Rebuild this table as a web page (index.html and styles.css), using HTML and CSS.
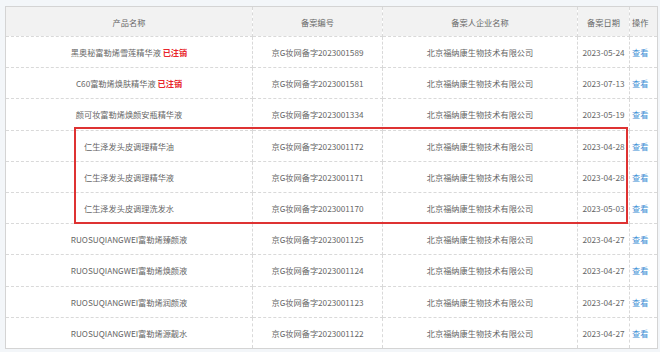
FILE: index.html
```html
<!DOCTYPE html>
<html lang="zh-CN">
<head>
<meta charset="utf-8">
<title>备案列表</title>
<link rel="stylesheet" href="styles.css">
</head>
<body>
<div class="wrap">
  <table class="grid">
    <colgroup>
      <col class="c1"><col class="c2"><col class="c3"><col class="c4"><col class="c5">
    </colgroup>
    <thead>
      <tr><th>产品名称</th><th>备案编号</th><th>备案人企业名称</th><th>备案日期</th><th>操作</th></tr>
    </thead>
    <tbody>
      <tr><td>黑奥秘富勒烯雪莲精华液 <span class="cancel">已注销</span></td><td>京G妆网备字2023001589</td><td>北京福纳康生物技术有限公司</td><td>2023-05-24</td><td class="op"><a>查看</a></td></tr>
      <tr><td>C60富勒烯焕肤精华液 <span class="cancel">已注销</span></td><td>京G妆网备字2023001581</td><td>北京福纳康生物技术有限公司</td><td>2023-07-13</td><td class="op"><a>查看</a></td></tr>
      <tr><td>颜可妆富勒烯焕颜安瓶精华液</td><td>京G妆网备字2023001334</td><td>北京福纳康生物技术有限公司</td><td>2023-05-19</td><td class="op"><a>查看</a></td></tr>
      <tr><td>仁生泽发头皮调理精华油</td><td>京G妆网备字2023001172</td><td>北京福纳康生物技术有限公司</td><td>2023-04-28</td><td class="op"><a>查看</a></td></tr>
      <tr><td>仁生泽发头皮调理精华液</td><td>京G妆网备字2023001171</td><td>北京福纳康生物技术有限公司</td><td>2023-04-28</td><td class="op"><a>查看</a></td></tr>
      <tr><td>仁生泽发头皮调理洗发水</td><td>京G妆网备字2023001170</td><td>北京福纳康生物技术有限公司</td><td>2023-05-03</td><td class="op"><a>查看</a></td></tr>
      <tr><td>RUOSUQIANGWEI富勒烯臻颜液</td><td>京G妆网备字2023001125</td><td>北京福纳康生物技术有限公司</td><td>2023-04-27</td><td class="op"><a>查看</a></td></tr>
      <tr><td>RUOSUQIANGWEI富勒烯焕颜液</td><td>京G妆网备字2023001124</td><td>北京福纳康生物技术有限公司</td><td>2023-04-27</td><td class="op"><a>查看</a></td></tr>
      <tr><td>RUOSUQIANGWEI富勒烯润颜液</td><td>京G妆网备字2023001123</td><td>北京福纳康生物技术有限公司</td><td>2023-04-27</td><td class="op"><a>查看</a></td></tr>
      <tr><td>RUOSUQIANGWEI富勒烯源靓水</td><td>京G妆网备字2023001122</td><td>北京福纳康生物技术有限公司</td><td>2023-04-27</td><td class="op"><a>查看</a></td></tr>
    </tbody>
  </table>
  <div class="highlight"></div>
</div>
</body>
</html>
```
FILE: styles.css
```css
html, body {
  margin: 0;
  padding: 0;
  background: #f3f6f9;
}
body {
  font-family: "Noto Sans CJK SC", "Noto Sans", sans-serif;
  font-size: 8.2px;
  color: #666;
}
.wrap {
  position: relative;
  padding: 6px 0 0 5px;
}
.grid {
  width: 652px;
  border-collapse: collapse;
  table-layout: fixed;
  background: #fff;
  border: 1px solid #d4d4d4;
}
.c1 { width: 247px; }
.c2 { width: 130px; }
.c3 { width: 195px; }
.c4 { width: 52px; }
.c5 { width: 28px; }
.grid th,
.grid td {
  border: 1px dashed #d9d9d9;
  text-align: center;
  white-space: nowrap;
  padding: 0;
  overflow: hidden;
}
.grid th {
  height: 29px;
  background: #f2f2f2;
  font-weight: normal;
  color: #666;
}
.grid td {
  height: 30.2px;
}
.grid td.op,
.grid th:last-child {
  text-align: left;
  padding-left: 2px;
}
.op a {
  color: #3f8fd6;
}
.cancel {
  color: #e8262c;
  font-weight: bold;
}
.highlight {
  position: absolute;
  left: 74px;
  top: 127px;
  width: 550px;
  height: 93px;
  border: 2px solid #de3232;
}
```
